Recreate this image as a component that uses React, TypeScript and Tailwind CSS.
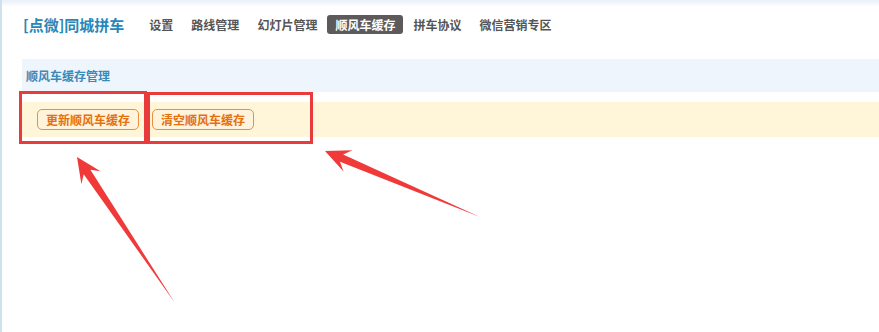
import React from "react";

type P = [number, number];

function arrowPoints(tip: P, tail: P, headLen = 25, headHalf = 11.5, notchLen = 18, notchHalf = 4): string {
  const dx = tip[0] - tail[0];
  const dy = tip[1] - tail[1];
  const len = Math.hypot(dx, dy);
  const ux = dx / len;
  const uy = dy / len;
  const nx = -uy;
  const ny = ux;
  const hb: P = [tip[0] - ux * headLen, tip[1] - uy * headLen];
  const nb: P = [tip[0] - ux * notchLen, tip[1] - uy * notchLen];
  const pts: P[] = [
    tip,
    [hb[0] + nx * headHalf, hb[1] + ny * headHalf],
    [nb[0] + nx * notchHalf, nb[1] + ny * notchHalf],
    tail,
    [nb[0] - nx * notchHalf, nb[1] - ny * notchHalf],
    [hb[0] - nx * headHalf, hb[1] - ny * headHalf],
  ];
  return pts.map((p) => `${p[0].toFixed(1)},${p[1].toFixed(1)}`).join(" ");
}

const tabs = ["设置", "路线管理", "幻灯片管理", "顺风车缓存", "拼车协议", "微信营销专区"];

export default function App() {
  const font = { fontFamily: '"Noto Sans CJK SC", "Noto Sans", sans-serif' };
  return (
    <div
      className="relative h-[332px] w-[879px] overflow-hidden border-l-2 border-[#cfe1ec] bg-white"
      style={font}
    >
      <div className="h-[7px] w-full bg-gradient-to-b from-[#e9f0f8] to-white" />
      <div className="-mt-[7px] flex h-[49px] items-center pl-[21px]">
        <div className="text-[15px] font-bold leading-none text-[#2787b9]">[点微]同城拼车</div>
        <div className="ml-[17px] flex items-center gap-[2px]">
          {tabs.map((t) => {
            const active = t === "顺风车缓存";
            return (
              <div
                key={t}
                className={
                  active
                    ? "flex h-[19px] items-center rounded-[3px] bg-[#5e5a5c] px-2 text-[12px] font-bold leading-none text-white"
                    : "flex h-[19px] items-center px-2 text-[12px] font-bold leading-none text-[#555555]"
                }
              >
                {t}
              </div>
            );
          })}
        </div>
      </div>

      <div className="mt-[10px] ml-[20px] flex h-[33px] items-center bg-[#eff5fc] pl-[4px]">
        <span className="text-[12px] font-bold leading-none text-[#3a8ab8]">顺风车缓存管理</span>
      </div>

      <div className="mt-[10px] ml-[20px] flex h-[35px] items-center gap-[13px] bg-[#fff5d9] pl-[15px]">
        <button className="flex h-[21px] items-center rounded-[5px] border border-[#e8913c] bg-[#fff3dc] px-2 text-[12px] font-bold leading-none text-[#e4700f]">
          更新顺风车缓存
        </button>
        <button className="flex h-[21px] items-center rounded-[5px] border border-[#e8913c] bg-[#fff3dc] px-2 text-[12px] font-bold leading-none text-[#e4700f]">
          清空顺风车缓存
        </button>
      </div>

      <div className="absolute left-[17px] top-[91px] h-[53px] w-[128px] border-[3px] border-[#e83c3c]" />
      <div className="absolute left-[145px] top-[92px] h-[52px] w-[166px] border-[3px] border-[#e83c3c]" />

      <svg className="absolute left-0 top-0" width="879" height="332" viewBox="0 0 879 332">
        <polygon points={arrowPoints([75, 157], [173, 303])} fill="#f03a3a" />
        <polygon points={arrowPoints([323, 151], [478, 217])} fill="#f03a3a" />
      </svg>
    </div>
  );
}
